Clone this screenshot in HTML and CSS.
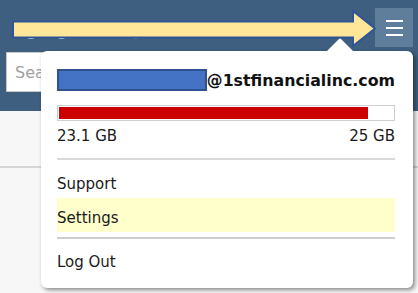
FILE: index.html
```html
<!DOCTYPE html>
<html lang="en">
<head>
    <meta charset="UTF-8">
    <title>Mail - Account menu</title>
    <link rel="stylesheet" href="styles.css">
</head>
<body>
    <header class="site-header">
        <div class="topbar">
            <span class="title">greg.smith@1stfinancialinc.com</span>
            <button class="menu-btn" type="button" aria-label="Menu">
                <span></span><span></span><span></span>
            </button>
        </div>
        <input class="search" type="text" placeholder="Search">
    </header>
    <div class="toolbar"></div>
    <main class="content"></main>

    <!-- account dropdown -->
    <div class="dropdown">
        <div class="account">
            <span class="redacted"></span>
            <span class="domain">@1stfinancialinc.com</span>
        </div>
        <div class="quota-bar">
            <div class="quota-used" style="width: 92.4%;"></div>
        </div>
        <div class="quota-text">
            <span>23.1 GB</span>
            <span>25 GB</span>
        </div>
        <hr class="sep">
        <div class="menu-item">Support</div>
        <div class="menu-item active">Settings</div>
        <hr class="sep dark">
        <div class="menu-item">Log Out</div>
    </div>

    <!-- callout arrow -->
    <svg class="callout" width="366" height="38" viewBox="0 0 366 38">
        <polygon points="1,11.5 341,11.5 341,1 363,18.5 341,36 341,27.5 1,27.5" fill="#ffe699" stroke="#2f5597" stroke-width="2" stroke-linejoin="miter"/>
    </svg>
</body>
</html>
```

FILE: styles.css
```css
body {
    margin: 0;
    padding: 0;
    background-color: #f7f7f7;
    font-family: "DejaVu Sans", Verdana, sans-serif;
    font-size: 15px;
    color: #1a1a1a;
    overflow: hidden;
}
.site-header {
    background-color: #3e5f80;
    height: 111px;
    padding-top: 8px;
    box-sizing: border-box;
}
.topbar {
    display: flex;
    justify-content: space-between;
    align-items: center;
    height: 39px;
    padding: 0 5px 0 26px;
}
.title {
    color: #fff;
    font-size: 17px;
    line-height: 22px;
    padding-top: 2px;
    letter-spacing: 1px;
}
.menu-btn {
    width: 38px;
    height: 39px;
    background-color: #5f7e9c;
    border: none;
    padding: 0;
    display: flex;
    flex-direction: column;
    align-items: center;
    justify-content: center;
    gap: 5px;
}
.menu-btn span {
    display: block;
    width: 17px;
    height: 2px;
    background-color: #fff;
}
.search {
    display: block;
    margin: 5px 0 0 6px;
    width: 200px;
    height: 40px;
    box-sizing: border-box;
    border: 1px solid #c8c8c8;
    padding: 0 8px;
    font-family: "DejaVu Sans", Verdana, sans-serif;
    font-size: 16px;
}
.search::placeholder {
    color: #a0a0a0;
}
.toolbar {
    height: 55px;
    border-bottom: 2px solid #d6d6d6;
}
.dropdown {
    position: absolute;
    left: 41px;
    top: 51px;
    width: 372px;
    height: 237px;
    box-sizing: border-box;
    padding: 18px 18px 0 16px;
    background-color: #fff;
    border-radius: 6px;
    box-shadow: 2px 2px 4px rgba(0, 0, 0, 0.45);
}
.dropdown::before {
    content: "";
    position: absolute;
    top: -13px;
    left: 286px;
    border-left: 13px solid transparent;
    border-right: 13px solid transparent;
    border-bottom: 13px solid #fff;
}
.account {
    display: flex;
    align-items: flex-start;
    height: 22px;
}
.redacted {
    width: 156px;
    height: 22px;
    box-sizing: border-box;
    background-color: #4472c4;
    border: 2px solid #2f528f;
}
.domain {
    font-weight: bold;
    font-size: 15.8px;
    line-height: 22px;
    padding-top: 1px;
    color: #111;
}
.quota-bar {
    margin-top: 14px;
    height: 16px;
    box-sizing: border-box;
    border: 1px solid #cfcfcf;
    padding: 1px;
}
.quota-used {
    height: 100%;
    background-color: #cc0000;
}
.quota-text {
    display: flex;
    justify-content: space-between;
    margin-top: 5px;
    line-height: 20px;
}
.sep {
    margin: 12px 0 4px;
    border: none;
    height: 2px;
    background-color: #dadada;
}
.sep.dark {
    margin: 5px 0 3px;
    background-color: #cdcdcd;
}
.menu-item {
    line-height: 28px;
    padding-top: 6px;
}
.menu-item.active {
    background-color: #ffffcc;
}
.callout {
    position: absolute;
    left: 12px;
    top: 10px;
}
```
